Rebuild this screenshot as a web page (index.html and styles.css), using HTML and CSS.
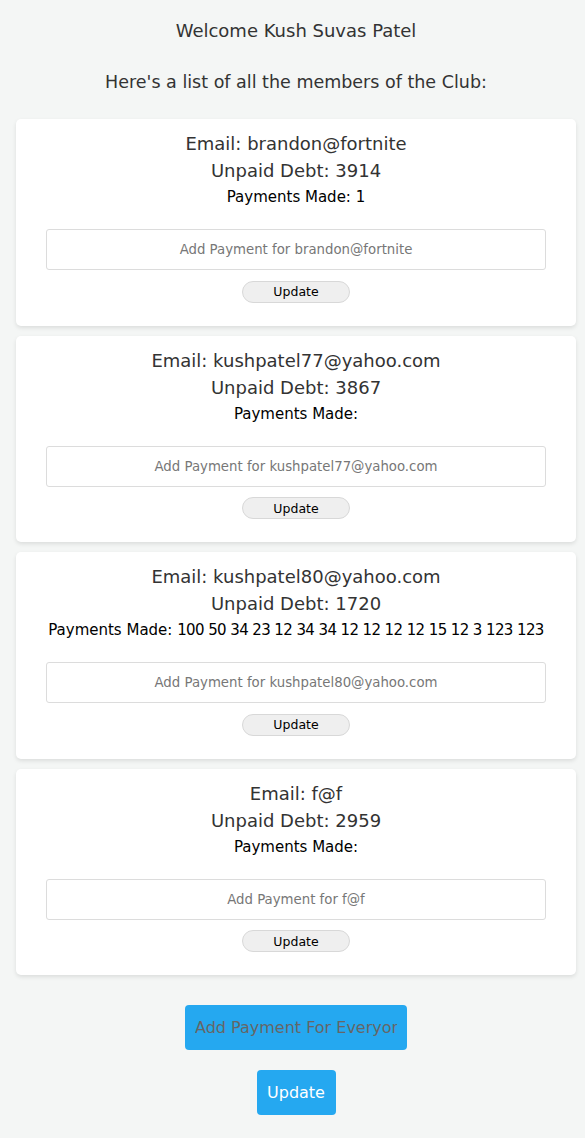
FILE: index.html
```html
<!DOCTYPE html>
<html>
<head>
<meta charset="utf-8">
<link rel="stylesheet" href="styles.css">
</head>
<body>
<div class="page">
  <p class="welcome">Welcome Kush Suvas Patel</p>
  <p class="intro">Here's a list of all the members of the Club:</p>
  <div class="list">
    <div class="card">
      <div class="email">Email: brandon@fortnite</div>
      <div class="debt">Unpaid Debt: 3914</div>
      <div class="payments">Payments Made: 1</div>
      <input class="pay-input" type="text" placeholder="Add Payment for brandon@fortnite">
      <button class="small-btn">Update</button>
    </div>
    <div class="card">
      <div class="email">Email: kushpatel77@yahoo.com</div>
      <div class="debt">Unpaid Debt: 3867</div>
      <div class="payments">Payments Made:</div>
      <input class="pay-input" type="text" placeholder="Add Payment for kushpatel77@yahoo.com">
      <button class="small-btn">Update</button>
    </div>
    <div class="card">
      <div class="email">Email: kushpatel80@yahoo.com</div>
      <div class="debt">Unpaid Debt: 1720</div>
      <div class="payments">Payments Made: <span class="nums">100 50 34 23 12 34 34 12 12 12 12 15 12 3 123 123</span></div>
      <input class="pay-input" type="text" placeholder="Add Payment for kushpatel80@yahoo.com">
      <button class="small-btn">Update</button>
    </div>
    <div class="card">
      <div class="email">Email: f@f</div>
      <div class="debt">Unpaid Debt: 2959</div>
      <div class="payments">Payments Made:</div>
      <input class="pay-input" type="text" placeholder="Add Payment for f@f">
      <button class="small-btn">Update</button>
    </div>
  </div>
  <div class="footer">
    <input class="all-input" type="text" placeholder="Add Payment For Everyone">
    <button class="big-btn">Update</button>
  </div>
</div>
</body>
</html>
```
FILE: styles.css
```css
* { box-sizing: border-box; }
html, body {
  margin: 0;
  padding: 0;
  background: #f4f6f5;
}
body {
  font-family: "DejaVu Sans", sans-serif;
  color: #333;
}
.page {
  display: flex;
  flex-direction: column;
  align-items: center;
  padding: 18px 9px 23px 16px;
}
.welcome, .intro {
  margin: 0;
  font-size: 18px;
  line-height: 26px;
  color: #333;
}
.intro {
  margin-top: 25px;
  font-size: 17.5px;
}
.list {
  margin-top: 24px;
  width: 560px;
  display: flex;
  flex-direction: column;
  gap: 10px;
}
.card {
  background: #fff;
  border-radius: 5px;
  box-shadow: 0 2px 4px rgba(0, 0, 0, 0.1);
  height: 206.5px;
  padding: 11px 0 0;
  display: flex;
  flex-direction: column;
  align-items: center;
}
.email, .debt {
  font-size: 18px;
  line-height: 27px;
  color: #333;
}
.payments {
  font-size: 15px;
  line-height: 26px;
  color: #000;
  white-space: nowrap;
}
.nums {
  letter-spacing: -0.6px;
}
.pay-input {
  margin-top: 19px;
  width: 500px;
  height: 41px;
  border: 1px solid #dcdcdc;
  border-radius: 3px;
  background: #fff;
  text-align: center;
  font-family: inherit;
  font-size: 13.3px;
  outline: none;
}
.pay-input::placeholder { color: #777; }
.small-btn {
  margin-top: 10.5px;
  width: 108px;
  height: 22px;
  border: 1px solid #d8d8d8;
  border-radius: 11px;
  background: #efefef;
  font-family: inherit;
  font-size: 12.5px;
  color: #000;
  padding: 0;
}
.footer {
  margin-top: 30px;
  display: flex;
  flex-direction: column;
  align-items: center;
  gap: 20px;
}
.all-input {
  width: 222px;
  height: 45px;
  background: #25a8f0;
  border: none;
  border-radius: 4px;
  padding: 0 10px;
  font-family: inherit;
  font-size: 16px;
  outline: none;
}
.all-input::placeholder { color: #666; }
.big-btn {
  width: 79px;
  height: 45px;
  background: #25a8f0;
  border: none;
  border-radius: 4px;
  color: #fff;
  font-family: inherit;
  font-size: 16px;
  padding: 0;
}
```
